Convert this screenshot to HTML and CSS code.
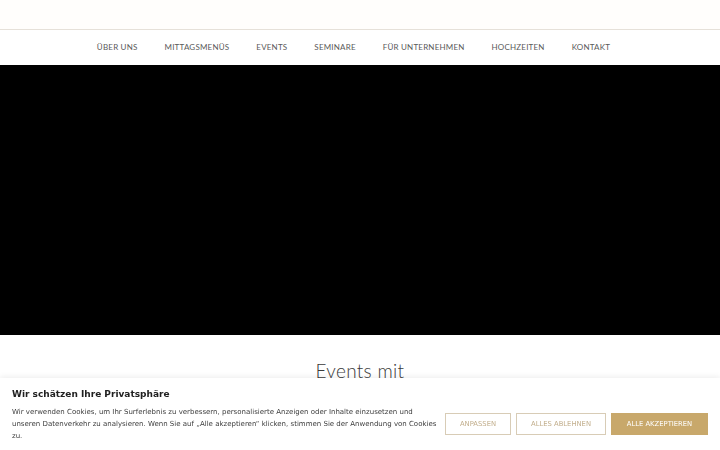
FILE: index.html
```html
<!DOCTYPE html>
<html lang="de">
<head>
  <meta charset="UTF-8">
  <title>Events</title>
  <link rel="stylesheet" href="styles.css">
</head>
<body>

<header class="topbar"></header>

<nav class="mainnav">
  <a href="#">Über uns</a>
  <a href="#">Mittagsmenüs</a>
  <a href="#">Events</a>
  <a href="#">Seminare</a>
  <a href="#">Für Unternehmen</a>
  <a href="#">Hochzeiten</a>
  <a href="#">Kontakt</a>
</nav>

<div class="video"></div>

<section class="intro">
  <h2>Events mit</h2>
</section>

<div class="cookie">
  <h3>Wir schätzen Ihre Privatsphäre</h3>
  <div class="cookie-row">
    <p>Wir verwenden Cookies, um Ihr Surferlebnis zu verbessern, personalisierte Anzeigen oder Inhalte einzusetzen und unseren Datenverkehr zu analysieren. Wenn Sie auf „Alle akzeptieren“ klicken, stimmen Sie der Anwendung von Cookies zu.</p>
    <div class="cookie-buttons">
      <button class="btn-outline btn-small">Anpassen</button>
      <button class="btn-outline">Alles ablehnen</button>
      <button class="btn-fill">Alle akzeptieren</button>
    </div>
  </div>
</div>

</body>
</html>
```

FILE: styles.css
```css
body {
  margin: 0;
  background: #fff;
  font-family: "Lato", sans-serif;
}
.topbar {
  height: 29px;
  background: #fffefc;
  border-bottom: 1px solid #e6e1d9;
}
.mainnav {
  height: 35px;
  display: flex;
  justify-content: center;
  align-items: center;
  gap: 27px;
  padding-right: 13px;
  padding-bottom: 1px;
  box-sizing: border-box;
}
.mainnav a {
  color: #5a5a5a;
  text-decoration: none;
  text-transform: uppercase;
  font-size: 8px;
  letter-spacing: 0.2px;
}
.video {
  height: 270px;
  background: #000;
}
.intro {
  text-align: center;
  padding-top: 24px;
}
.intro h2 {
  margin: 0;
  font-weight: 300;
  font-size: 19px;
  color: #3a3a3a;
  letter-spacing: 0.3px;
}
.cookie {
  position: fixed;
  left: 0;
  right: 0;
  bottom: 0;
  height: 72px;
  box-sizing: border-box;
  background: #fff;
  padding: 11px 12px 0 12px;
  box-shadow: 0 -1px 6px rgba(0,0,0,0.08);
  font-family: "DejaVu Sans", sans-serif;
}
.cookie h3 {
  margin: 0 0 7px 0;
  font-size: 9px;
  color: #212121;
}
.cookie-row {
  display: flex;
  align-items: center;
  gap: 8px;
}
.cookie p {
  margin: 0;
  width: 428px;
  font-size: 7px;
  line-height: 12px;
  color: #3c3c3c;
}
.cookie-buttons {
  display: flex;
  gap: 5px;
  margin-left: auto;
}
.cookie button {
  height: 22px;
  font-family: "DejaVu Sans", sans-serif;
  font-size: 6.8px;
  text-transform: uppercase;
  padding: 0;
  white-space: nowrap;
  cursor: pointer;
  box-sizing: border-box;
}
.btn-outline {
  background: #fff;
  border: 1.5px solid #d8ccb6;
  color: #c2ae8c;
  width: 90px;
}
.btn-outline.btn-small {
  width: 66px;
}
.btn-fill {
  background: #c8a86b;
  border: 1.5px solid #c8a86b;
  color: #fff;
  width: 97px;
}
```
